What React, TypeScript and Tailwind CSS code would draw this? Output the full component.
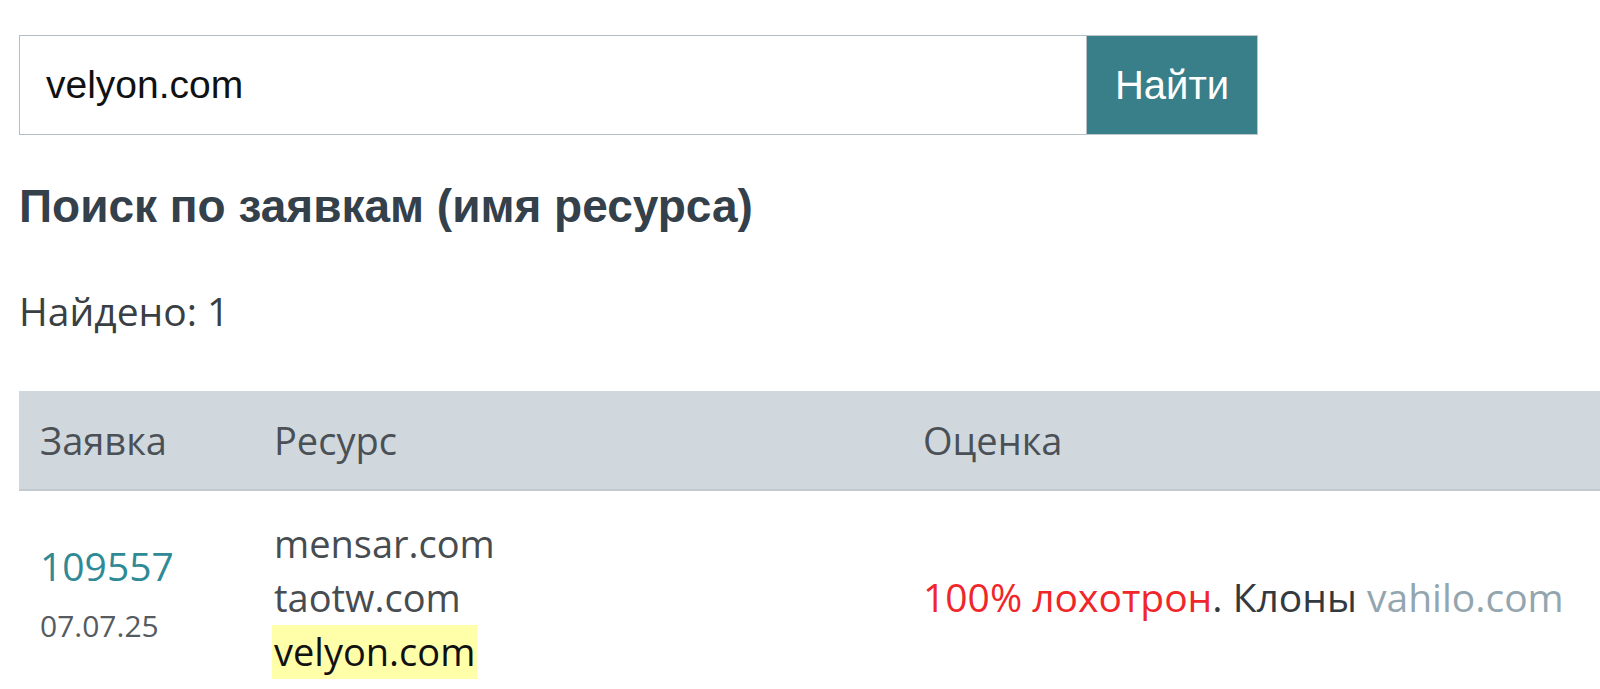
import React from "react";

export default function App() {
  const sans = { fontFamily: '"Open Sans", "Noto Sans", sans-serif' };
  return (
    <div className="min-h-screen bg-white pl-[19px] pt-[35px] overflow-hidden">
      <div className="flex h-[100px] w-[1239px]">
        <div
          className="flex-1 border border-[#b4bec5] flex items-center pl-[26px] text-[39px] text-[#111]"
          style={{ fontFamily: '"Liberation Sans", Arial, sans-serif' }}
        >
          velyon.com
        </div>
        <button
          className="w-[171px] h-full bg-[#387f89] text-white text-[40px] border border-[#bfc6ca] border-l-0"
          style={{ fontFamily: '"Liberation Sans", Arial, sans-serif' }}
        >
          Найти
        </button>
      </div>

      <h2
        className="mt-[45px] text-[46px] leading-[52px] font-bold text-[#34404a]"
        style={{ fontFamily: '"Liberation Sans", Arial, sans-serif' }}
      >
        Поиск по заявкам (имя ресурса)
      </h2>

      <p className="mt-[53px] text-[39px] leading-[52px] text-[#3a3f44]" style={sans}>
        Найдено: 1
      </p>

      <table className="mt-[54px] w-[1600px] border-collapse" style={sans}>
        <thead>
          <tr className="bg-[#d0d8dd] border-b-2 border-[#c3cacf] h-[99px]">
            <th className="w-[235px] text-left font-normal pl-[21px] text-[38px] text-[#4a5056]">Заявка</th>
            <th className="w-[649px] text-left font-normal pl-[20px] text-[38px] text-[#4a5056]">Ресурс</th>
            <th className="text-left font-normal pl-[20px] text-[38px] text-[#4a5056]">Оценка</th>
          </tr>
        </thead>
        <tbody>
          <tr>
            <td className="align-top pl-[21px] pt-[50px]">
              <div className="text-[39px] leading-[50px] text-[#2f8a96]">109557</div>
              <div className="mt-[10px] text-[30px] leading-[50px] text-[#555b60]">07.07.25</div>
            </td>
            <td className="align-top pl-[18px] pt-[25px] text-[38px] leading-[54px] text-[#474c51]">
              <div className="px-[2px]">mensar.com</div>
              <div className="px-[2px]">taotw.com</div>
              <div>
                <span className="bg-[#ffffaa] text-[#111] px-[2px] pb-[2px]">velyon.com</span>
              </div>
            </td>
            <td className="align-top pl-[20px] pt-[79px] text-[39px] leading-[54px] whitespace-nowrap">
              <span className="text-[#f0262b]">100% лохотрон</span>
              <span className="text-[#33393e]">. Клоны </span>
              <span className="text-[#93a5ae]">vahilo.com</span>
            </td>
          </tr>
        </tbody>
      </table>
    </div>
  );
}
